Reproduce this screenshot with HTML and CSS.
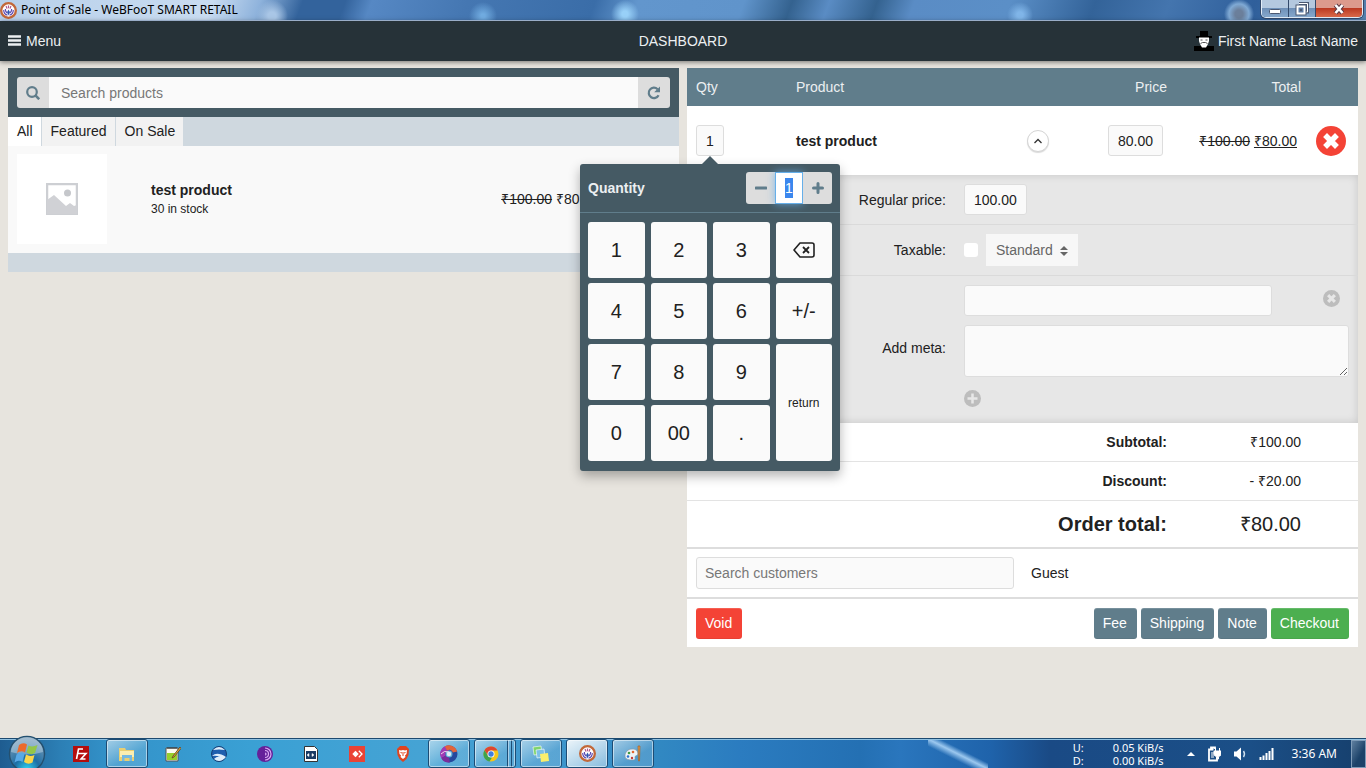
FILE: index.html
```html
<!DOCTYPE html>
<html lang="en">
<head>
    <meta charset="UTF-8">
    <meta name="viewport" content="width=device-width, initial-scale=1.0">
    <title>Point of Sale - WeBFooT SMART RETAIL</title>
    <link rel="stylesheet" href="styles.css">
</head>
<body>
<svg class="sprite" aria-hidden="true">
    <symbol id="logo" viewBox="0 0 16 16">
        <circle cx="8" cy="8" r="6.9" fill="#fff" stroke="#c2683a" stroke-width="2.2"/>
        <path d="M8 3.2v2.6M5.7 3.8l.9 2.4M10.300 3.800l-.9 2.400" stroke="#b0568a" stroke-width="1.100" fill="none"/>
        <path d="M3.500 7.500q0 4 3.500 4.800M12.500 7.500q0 4-3.500 4.800M5 6.500q0 3 2 4.200M11 6.500q0 3-2 4.200" stroke="#5a46b0" stroke-width="1.100" fill="none"/>
        <path d="M8 7l1.300 2.500L8 12.800 6.700 9.500z" fill="#2f58b0"/>
    </symbol>
    <symbol id="x-circle" viewBox="0 0 30 30">
        <circle cx="15" cy="15" r="15" fill="currentColor"/>
        <path d="M11 11l8 8M19 11l-8 8" class="cross" stroke-width="5.500" stroke-linecap="square"/>
    </symbol>
</svg>
<div class="titlebar">
    <svg class="titlebar-logo"><use href="#logo"/></svg>
    <span class="titlebar-text">Point of Sale - WeBFooT SMART RETAIL</span>
    <div class="window-buttons">
        <button class="win-btn" aria-label="Minimize">
            <svg width="14" height="12" viewBox="0 0 14 12"><rect x="1.500" y="6.500" width="11" height="4" rx="1" fill="#fff" stroke="#4b5872"/></svg>
        </button>
        <button class="win-btn" aria-label="Restore">
            <svg width="14" height="14" viewBox="0 0 14 14"><path d="M4 1.500h8.500v8.500h-2" fill="none" stroke="#4b5872" stroke-width="3"/><path d="M4 1.500h8.500v8.500h-2" fill="none" stroke="#fff"/><rect x="2.500" y="4.500" width="7" height="7" fill="#4b5872" stroke="#4b5872" stroke-width="4"/><rect x="2.500" y="4.500" width="7" height="7" fill="#5f7da5" stroke="#fff" stroke-width="2"/><rect x="5" y="7" width="2" height="2" fill="#4b5872"/></svg>
        </button>
        <button class="win-btn win-close" aria-label="Close">
            <svg width="14" height="12" viewBox="0 0 14 12"><path d="M3.500 2l7 8M10.500 2l-7 8" stroke="#5b3a45" stroke-width="4.500"/><path d="M3.500 2l7 8M10.500 2l-7 8" stroke="#fff" stroke-width="2.600"/></svg>
        </button>
    </div>
</div>

<header class="header">
    <a href="#" class="menu-link">
        <svg width="14" height="14" viewBox="0 0 14 14"><path d="M0 2.500h13M0 6.500h13M0 10.500h13" stroke="#eceff1" stroke-width="2.400"/></svg>
        Menu
    </a>
    <h1>DASHBOARD</h1>
    <a href="#" class="user-link">
        <svg width="20" height="20" viewBox="0 0 20 20">
            <path d="M6 0h8v5h4v2H2V5h4zM0 15h20v5H0z" fill="#000"/>
            <path d="M5 6.500h10v3.500l-1 3-2 3.500H8L6 13l-1-3z" fill="#fff"/>
            <path d="M6.500 9h2M11.500 9h2M6.500 12.500l2-1h3l2 1" stroke="#555" fill="none"/>
        </svg>
        First Name Last Name
    </a>
</header>

<main class="columns">
    <section class="products">
        <form class="search-bar">
            <div class="input-group">
                <button type="button" aria-label="Search">
                    <svg width="14" height="14" viewBox="0 0 14 14"><circle cx="6" cy="6" r="4.800" fill="none" stroke="currentColor" stroke-width="2.200"/><path d="M9.200 9.200l4 4" stroke="currentColor" stroke-width="2.600"/></svg>
                </button>
                <input type="text" placeholder="Search products" aria-label="Search products">
                <button type="button" aria-label="Refresh">
                    <svg width="14" height="14" viewBox="0 0 14 14"><path d="M11.600 9.200A5.200 5.200 0 1 1 10.600 3.200" fill="none" stroke="currentColor" stroke-width="2.200"/><path d="M13 .5v5.800H7.200z" fill="currentColor"/></svg>
                </button>
            </div>
        </form>
        <nav class="tabs">
            <a href="#" class="active">All</a>
            <a href="#">Featured</a>
            <a href="#">On Sale</a>
        </nav>
        <article class="product">
            <div class="product-image">
                <svg width="32" height="32" viewBox="0 0 32 32">
                    <rect x="1" y="1" width="30" height="30" fill="#fff" stroke="#cdcfd3" stroke-width="2.500"/>
                    <circle cx="21.500" cy="10" r="3.500" fill="#c5c7cb"/>
                    <path d="M1 17l7-5 12 11 4-3 4 3 3-1v9H1z" fill="#d0d1d5"/>
                </svg>
            </div>
            <div class="product-info">
                <strong>test product</strong>
                <small>30 in stock</small>
            </div>
            <div class="product-price"><del>₹100.00</del> ₹80.00</div>
        </article>
        <div class="products-footer"></div>
    </section>

    <section class="cart">
        <table class="cart-table">
            <thead>
            <tr>
                <th class="col-qty">Qty</th>
                <th>Product</th>
                <th class="col-price">Price</th>
                <th class="col-total">Total</th>
                <th class="col-remove" aria-label="Remove"></th>
            </tr>
            </thead>
            <tbody>
            <tr class="cart-item">
                <td>
                    <div class="qty">
                        <button class="field-btn">1</button>
                        <div class="popover">
                            <div class="popover-header">
                                <label for="quantity">Quantity</label>
                                <div class="input-group stepper">
                                    <button aria-label="Decrease"><svg width="12" height="12" viewBox="0 0 12 12"><path d="M1 6h10" stroke="currentColor" stroke-width="3" stroke-linecap="round"/></svg></button>
                                    <input type="text" id="quantity" value="1">
                                    <button aria-label="Increase"><svg width="12" height="12" viewBox="0 0 12 12"><path d="M1.500 6h9M6 1.500v9" stroke="currentColor" stroke-width="3" stroke-linecap="round"/></svg></button>
                                </div>
                            </div>
                            <div class="keypad">
                                <button>1</button>
                                <button>2</button>
                                <button>3</button>
                                <button aria-label="Delete">
                                    <svg width="22" height="16" viewBox="0 0 22 16"><path d="M7 1h12q2 0 2 2v10q0 2-2 2H7L1 8z" fill="none" stroke="currentColor" stroke-width="1.600" stroke-linejoin="round"/><path d="M10 5l6 6M16 5l-6 6" stroke="currentColor" stroke-width="1.800"/></svg>
                                </button>
                                <button>4</button>
                                <button>5</button>
                                <button>6</button>
                                <button>+/-</button>
                                <button>7</button>
                                <button>8</button>
                                <button>9</button>
                                <button class="key-return">return</button>
                                <button>0</button>
                                <button>00</button>
                                <button>.</button>
                            </div>
                        </div>
                    </div>
                </td>
                <td>
                    <div class="cart-name">
                        <strong>test product</strong>
                        <button class="toggle" aria-label="Hide details">
                            <svg width="10" height="6" viewBox="0 0 10 6"><path d="M1.500 5L5 1.500 8.500 5" fill="none" stroke="#333" stroke-width="1.300"/></svg>
                        </button>
                    </div>
                </td>
                <td class="num"><button class="field-btn">80.00</button></td>
                <td class="num"><del>₹100.00</del> <ins>₹80.00</ins></td>
                <td class="remove-cell">
                    <button class="icon-btn remove" aria-label="Remove item"><svg width="30" height="30"><use href="#x-circle"/></svg></button>
                </td>
            </tr>
            <tr>
                <td colspan="5" class="details">
                    <div class="detail-row">
                        <label for="regular-price">Regular price:</label>
                        <div><button class="field-btn" id="regular-price">100.00</button></div>
                    </div>
                    <div class="detail-row">
                        <label for="taxable">Taxable:</label>
                        <div class="tax">
                            <input type="checkbox" id="taxable">
                            <div class="select-wrap">
                                <select aria-label="Tax class">
                                    <option>Standard</option>
                                </select>
                                <svg width="8" height="10" viewBox="0 0 8 10"><path d="M4 0l4 4H0zM4 10L0 6h8z" fill="#666"/></svg>
                            </div>
                        </div>
                    </div>
                    <div class="detail-row">
                        <label for="meta-value">Add meta:</label>
                        <div class="meta">
                            <div class="meta-key">
                                <input type="text" aria-label="Meta key">
                                <button class="icon-btn" aria-label="Remove meta"><svg width="17" height="17"><use href="#x-circle"/></svg></button>
                            </div>
                            <textarea id="meta-value"></textarea>
                            <button class="icon-btn add-meta" aria-label="Add meta">
                                <svg width="17" height="17" viewBox="0 0 17 17"><circle cx="8.500" cy="8.500" r="8.500" fill="currentColor"/><path d="M3.500 8.500h10M8.500 3.500v10" stroke="#e7e7e7" stroke-width="2.500"/></svg>
                            </button>
                        </div>
                    </div>
                </td>
            </tr>
            </tbody>
        </table>

        <dl class="totals">
            <div><dt>Subtotal:</dt><dd>₹100.00</dd></div>
            <div><dt>Discount:</dt><dd>- ₹20.00</dd></div>
            <div class="order-total"><dt>Order total:</dt><dd>₹80.00</dd></div>
        </dl>
        <div class="customer">
            <input type="text" placeholder="Search customers" aria-label="Search customers">
            <span>Guest</span>
        </div>
        <div class="actions">
            <button class="btn btn-void">Void</button>
            <button class="btn">Fee</button>
            <button class="btn">Shipping</button>
            <button class="btn">Note</button>
            <button class="btn btn-checkout">Checkout</button>
        </div>
    </section>
</main>

<footer class="taskbar">
    <button class="start" aria-label="Start">
        <svg width="38" height="38" viewBox="0 0 38 38">
            <defs>
                <radialGradient id="orb" cx=".5" cy=".95" r=".9">
                    <stop offset="0" stop-color="#2fd8f5"/>
                    <stop offset=".4" stop-color="#1d6ea5"/>
                    <stop offset="1" stop-color="#7d9db8"/>
                </radialGradient>
            </defs>
            <circle cx="19" cy="19" r="17.500" fill="url(#orb)" stroke="#24506f" stroke-width="1.500"/>
            <path d="M3 17a16 15 0 0 1 32 0q-16 5-32 0z" fill="#dceaf3" opacity=".4"/>
            <path d="M11 10q4-3 8-.5l-2 8q-4-2.500-8 .5z" fill="#ec6a2b"/>
            <path d="M20.500 10.500q4 2 9-.5l-2.500 8q-4 2.500-8.500-.5z" fill="#94c748"/>
            <path d="M8.500 19.500q4-3 8-.5l-2 8q-4-2.500-8 .5z" fill="#58a9e6"/>
            <path d="M18 19.500q4 2.500 8.500.5l-2 7.500q-4 2.500-8.500-.5z" fill="#fbd64b"/>
        </svg>
    </button>
    <div class="tasks">
        <button aria-label="FileZilla">
            <svg width="16" height="16" viewBox="0 0 16 16"><rect width="16" height="16" fill="#b50d0d"/><path d="M10 3H5.500L3.500 13M4.500 7.500h4M8 7.500h5L8 13h4.500" fill="none" stroke="#fff" stroke-width="1.600"/></svg>
        </button>
        <button class="open" aria-label="Explorer">
            <svg width="18" height="16" viewBox="0 0 18 16"><path d="M1 2h6l1 2h8v11H1z" fill="#e9cf72"/><path d="M2 5h14v6H2z" fill="#fbeeb0"/><path d="M4 15V9h10v6h-2.500v-3h-5v3z" fill="#74b9e2"/></svg>
        </button>
        <button aria-label="Notepad++">
            <svg width="16" height="16" viewBox="0 0 16 16"><path d="M1 2h12v13H1z" fill="#fafaf0" stroke="#555"/><path d="M2 7h10v7H2z" fill="#98cf2c"/><path d="M3 1v2M5 1v2M7 1v2M9 1v2M11 1v2" stroke="#333"/><path d="M15 1L8 10l-1 2 2-1 7-8.500z" fill="#e8a33b" stroke="#5b4322" stroke-width=".8"/></svg>
        </button>
        <button aria-label="Browser">
            <svg width="16" height="16" viewBox="0 0 16 16"><circle cx="8" cy="8" r="7.500" fill="#1e5fae" stroke="#153e74"/><path d="M2 4q6-6 12 0-6-1-12 0zM1 10q5-5 14 1-6 7-12 2 3-3 6-2-4-2-8-1z" fill="#dfeefa"/></svg>
        </button>
        <button aria-label="Tor Browser">
            <svg width="16" height="16" viewBox="0 0 16 16"><circle cx="8" cy="8" r="8" fill="#65209a"/><path d="M8 2a6 6 0 0 1 0 12M8 4.500a3.500 3.500 0 0 1 0 7M8 7a1 1 0 0 1 0 2" fill="none" stroke="#d9a8f2" stroke-width="1.200"/></svg>
        </button>
        <button aria-label="Console">
            <svg width="14" height="16" viewBox="0 0 14 16"><path d="M.5.5h10l3 3v12H.5z" fill="#fff" stroke="#333"/><rect x="2" y="5" width="10" height="8" fill="#183a63"/><path d="M3 9l2-1.500v3zM8 7.500v3L10 9z" fill="#fff" stroke="#fff" stroke-width=".5"/></svg>
        </button>
        <button aria-label="AnyDesk">
            <svg width="16" height="16" viewBox="0 0 16 16"><rect width="16" height="16" fill="#ea4335"/><path d="M6.500 4.800L9.700 8l-3.200 3.200L3.300 8z" fill="#fff"/><path d="M9.800 4.800L13 8l-3.200 3.200" fill="none" stroke="#fff" stroke-width="1.300"/></svg>
        </button>
        <button aria-label="Brave">
            <svg width="14" height="16" viewBox="0 0 14 16"><path d="M4 0h6l1.500 1.500L13 3l-.5 6-2 4L7 16l-3.500-3-2-4L1 3z" fill="#e0441f"/><path d="M3 4l2 .5L7 4l2 .5 2-.5-.5 4L9 9.500l.5 1.500L7 13l-2.500-2 .5-1.500L3.500 8z" fill="#fff"/><path d="M7 6v4M4.500 6.500L6 7M9.500 6.500L8 7" stroke="#e0441f" fill="none"/></svg>
        </button>
        <button class="open" aria-label="Media">
            <svg width="18" height="18" viewBox="0 0 18 18"><circle cx="9" cy="9" r="6" fill="none" stroke="#25489d" stroke-width="5"/><path d="M3.500 12A6 6 0 0 1 9 3" fill="none" stroke="#a13bb5" stroke-width="5"/><path d="M6 3.500A6 6 0 0 1 15 7" fill="none" stroke="#e2653b" stroke-width="4.500"/><path d="M3.500 12a6 6 0 0 0 6 3" fill="none" stroke="#7a2d9c" stroke-width="5"/><path d="M1 9q3-4 8-2" stroke="#efd9ee" fill="none"/><circle cx="9" cy="9" r="2.200" fill="#e4ecf5"/></svg>
        </button>
        <button class="open stacked" aria-label="Chrome">
            <svg width="16" height="16" viewBox="0 0 16 16"><circle cx="8" cy="8" r="7.500" fill="#f5c61b"/><path d="M1.500 4.200A7.500 7.500 0 0 1 14.500 4.500H8L5 9.500z" fill="#dd4632"/><path d="M1.500 4.200L5 9.800l4 1.700-2.500 4A7.500 7.500 0 0 1 1.500 4.200z" fill="#3fa34e"/><circle cx="8" cy="8" r="3.500" fill="#fff"/><circle cx="8" cy="8" r="2.700" fill="#3f7ee0"/></svg>
        </button>
        <button class="open" aria-label="Sticky Notes">
            <svg width="18" height="18" viewBox="0 0 18 18"><path d="M1 2l8-1 1 8-8 1z" fill="#7fd46c" stroke="#fff" stroke-width=".6"/><path d="M4 5l8-1 1 8-8 1z" fill="#7cc0e8" stroke="#fff" stroke-width=".6"/><path d="M8 9l8-1 1 8-8 1z" fill="#fbee6c"/></svg>
        </button>
        <button class="open current" aria-label="Point of Sale"><svg width="17" height="17"><use href="#logo"/></svg></button>
        <button class="open" aria-label="Paint">
            <svg width="18" height="18" viewBox="0 0 18 18"><path d="M1 11c0-4 3-7 7-7s6 2 6 5c0 2-3 1-3 3s1 3-3 3-7-1-7-4z" fill="#eef3f7" stroke="#8396a8" stroke-width=".7"/><circle cx="5" cy="8" r="1.300" fill="#3f9b42"/><circle cx="9" cy="7" r="1.300" fill="#e2662c"/><circle cx="4" cy="11.500" r="1.300" fill="#2c73cf"/><circle cx="8" cy="13" r="1.200" fill="#c53b35"/><path d="M14 1h2l-.5 15h-1z" fill="#e99b45" stroke="#a2622a" stroke-width=".7"/></svg>
        </button>
    </div>
    <dl class="net-speed">
        <dt>U:</dt><dd>0.05 KiB/s</dd>
        <dt>D:</dt><dd>0.00 KiB/s</dd>
    </dl>
    <div class="tray">
        <svg width="8" height="4" viewBox="0 0 8 4"><path d="M0 4l4-4 4 4z" fill="#fff"/></svg>
        <svg width="14" height="16" viewBox="0 0 14 16"><path d="M6.500 3.500H2v11h8V11M4 3V1.500h4V3" fill="none" stroke="#fff" stroke-width="1.800"/><path d="M4 6h3v6H4z" fill="#fff" opacity=".5"/><path d="M7 5h7v3q0 2-2.500 2.500V13h-2v-2.500Q7 10 7 8zM8.500 2v3M12.500 2v3" fill="#fff" stroke="#fff"/></svg>
        <svg width="14" height="14" viewBox="0 0 14 14"><path d="M1 4.500h2.500L8 .5v13L3.500 9.500H1z" fill="#fff"/><path d="M10.500 4q2 3 0 6" fill="none" stroke="#cfe0ef" stroke-width="1.400"/></svg>
        <svg width="15" height="12" viewBox="0 0 15 12"><path d="M1.500 9v3M4.500 7.500v4.500M7.500 5v7M10.500 3v9M13.500 0v12" stroke="#fff" stroke-width="2"/></svg>
    </div>
    <time class="clock">3:36 AM</time>
    <button class="show-desktop" aria-label="Show desktop"></button>
</footer>

<script>
    // Open the numpad with its value ready to be overwritten
    const quantity = document.getElementById('quantity');
    quantity.focus();
    quantity.select();
</script>
</body>
</html>
```

FILE: styles.css
```css
:root {
    --header: #263238;
    --dark: #455a64;
    --slate: #607d8b;
    --page: #e7e4de;
    --field: #fafafa;
    --border: #dddddd;
    --red: #f44336;
    --green: #4caf50;
}
* {
    box-sizing: border-box;
}
body {
    display: flex;
    flex-direction: column;
    min-height: 100vh;
    margin: 0;
    background: var(--page);
    color: #212121;
    font: 14px/20px "Liberation Sans", Arial, sans-serif;
}
button, input, select, textarea {
    font: inherit;
    color: inherit;
    margin: 0;
}
button {
    padding: 0;
    border: 0;
    background: none;
    cursor: pointer;
}
svg {
    display: block;
    flex: none;
}
dl, dd, h1 {
    margin: 0;
}
.sprite {
    position: absolute;
    width: 0;
    height: 0;
}

/* window title bar */
.titlebar {
    display: flex;
    align-items: center;
    height: 21px;
    border-bottom: 1px solid #b4cbea;
    background:
        radial-gradient(circle at 272px 16px, #a9c6e6 4px, transparent 16px),
        radial-gradient(circle at 483px 16px, #70abe0 2px, transparent 14px),
        radial-gradient(circle at 625px 14px, #98d0f8 3px, transparent 14px),
        radial-gradient(circle at 1020px 15px, #80b5e8 3px, transparent 13px),
        radial-gradient(circle at 1239px 14px, #6b7f9b 4px, #7fa9d4 10px, transparent 15px),
        linear-gradient(110deg, #b8d0ea 0, #c9dcf1 200px, #8fb3dc 245px, #33639c 285px, #33639c 325px, #5688c4 350px, #4577b2 440px, #3a6da8 560px, #6296cd 600px, #6094cb 700px, #34628f 745px, #5a8cc4 780px, #34628f 825px, #5a8cc5 860px, #5b8fc7 950px, #336399 1030px, #4475ae 1100px, #2f5f9b 1180px, #5580ad 100%);
    color: #000;
    font: 12px/20px "Noto Sans", "Segoe UI", sans-serif;
}
.titlebar-logo {
    width: 17px;
    height: 17px;
}
.titlebar-text {
    margin-left: 4px;
}
.window-buttons {
    display: flex;
    align-self: flex-start;
    height: 18px;
    margin: 0 3px 0 auto;
    border: 1px solid #e3edf8;
    border-top: 0;
    border-radius: 0 0 5px 5px;
    box-shadow: 0 0 0 1px #33496b;
    overflow: hidden;
}
.win-btn {
    display: grid;
    place-items: center;
    width: 27px;
    border-right: 1px solid #33496b;
    background: linear-gradient(#b4c8df 45%, #6f90b8 50%, #86a8cd);
}
.win-close {
    width: 46px;
    border-right: 0;
    background: linear-gradient(#dc9a8c 45%, #bb3a22 50%, #d9694a);
}

/* application header */
.header {
    display: grid;
    grid-template-columns: 1fr auto 1fr;
    align-items: center;
    height: 40px;
    padding: 0 8px;
    background: var(--header);
    color: #eceff1;
    box-shadow: 0 1px 5px rgba(0, 0, 0, 0.5);
}
.header h1 {
    font-size: 14px;
    font-weight: normal;
}
.header a {
    display: flex;
    align-items: center;
    gap: 4px;
    color: inherit;
    text-decoration: none;
}
.user-link {
    justify-self: end;
}
.columns {
    flex: 1;
    display: grid;
    grid-template-columns: minmax(0, 1fr) minmax(0, 1fr);
    gap: 8px;
    align-items: start;
    padding: 7px 8px;
}

/* product list */
.search-bar {
    padding: 9px;
    background: var(--dark);
}
.input-group {
    display: flex;
    height: 31px;
    border-radius: 3px;
}
.input-group button {
    display: grid;
    place-items: center;
    width: 32px;
    background: #dddddd;
    color: var(--slate);
}
.input-group button:first-child {
    border-radius: 3px 0 0 3px;
}
.input-group button:last-child {
    border-radius: 0 3px 3px 0;
}
.input-group input {
    flex: 1;
    min-width: 0;
    padding: 0 12px;
    border: 0;
    background: var(--field);
}
input::placeholder {
    color: #777777;
}
.tabs {
    display: flex;
    gap: 1px;
    background: #cfd8df;
}
.tabs a {
    padding: 4px 8px 5px 9px;
    background: #f2f2f2;
    color: inherit;
    text-decoration: none;
}
.tabs .active {
    background: #fff;
}
.product {
    display: flex;
    align-items: center;
    padding: 8px 9px 9px;
    background: #f9f9f9;
}
.product-image {
    display: grid;
    place-items: center;
    width: 90px;
    height: 90px;
    background: #fff;
}
.product-info {
    display: flex;
    flex-direction: column;
    flex: 1;
    margin-left: 44px;
}
.product-info small {
    font-size: 12px;
    line-height: 18px;
}
.product-price {
    margin-right: 71px;
}
.products-footer {
    height: 19px;
    background: #cfd8df;
}

/* cart */
.cart {
    background: #fff;
}
.cart-table {
    width: 100%;
    table-layout: fixed;
    border-collapse: collapse;
}
.cart-table th {
    padding: 9px;
    background: var(--slate);
    color: #eceff1;
    font-weight: normal;
    text-align: left;
}
.col-qty {
    width: 100px;
}
.cart-table .col-price {
    width: 118px;
    text-align: right;
}
.cart-table .col-total {
    width: 134px;
    text-align: right;
}
.col-remove {
    width: 48px;
}
.cart-item td {
    height: 69px;
    padding: 0 9px;
}
.cart-table .num {
    padding: 0 13px 0 0;
    text-align: right;
    white-space: nowrap;
}
.field-btn {
    height: 31px;
    padding: 0 9px;
    border: 1px solid var(--border);
    border-radius: 3px;
    background: var(--field);
}
.cart-name {
    display: flex;
    justify-content: space-between;
    align-items: center;
}
.toggle {
    display: grid;
    place-items: center;
    width: 22px;
    height: 22px;
    border: 1px solid #d5d5d5;
    border-radius: 50%;
    background: #fff;
    box-shadow: 0 1px 1px rgba(0, 0, 0, 0.15);
}
.icon-btn {
    --cross: #e7e7e7;
    display: grid;
    place-items: center;
    color: #bdbdbd;
}
.cross {
    stroke: var(--cross);
}
.cart-item .remove-cell {
    padding: 0 12px 0 6px;
}
.remove {
    --cross: #fff;
    color: var(--red);
}
.details {
    padding: 0;
    background: #e7e7e7;
    box-shadow: inset 0 0 8px rgba(0, 0, 0, 0.15);
}
.detail-row {
    display: grid;
    grid-template-columns: 250px 1fr;
    gap: 18px;
    align-items: center;
    padding: 9px;
}
.detail-row + .detail-row {
    border-top: 1px solid #dadada;
}
.detail-row:last-child {
    padding-bottom: 13px;
}
.detail-row > label {
    text-align: right;
}
.tax {
    display: flex;
    align-items: center;
    gap: 8px;
}
.tax input {
    appearance: none;
    width: 14px;
    height: 14px;
    border-radius: 3px;
    background: #fff;
}
.select-wrap {
    position: relative;
}
.select-wrap select {
    appearance: none;
    display: block;
    width: 92px;
    height: 32px;
    padding: 0 10px;
    border: 0;
    background: #f7f7f7;
    color: #666666;
}
.select-wrap svg {
    position: absolute;
    top: 12px;
    right: 10px;
    pointer-events: none;
}
.meta {
    display: flex;
    flex-direction: column;
    gap: 9px;
}
.meta-key {
    display: flex;
    justify-content: space-between;
}
.meta-key input {
    width: 80%;
    height: 31px;
}
.meta-key .icon-btn {
    width: 36px;
    height: 27px;
}
.meta input, .meta textarea, .customer input {
    padding: 0 8px;
    border: 1px solid var(--border);
    border-radius: 3px;
    background: var(--field);
}
.meta textarea {
    display: block;
    width: 100%;
    height: 52px;
}
.add-meta {
    align-self: flex-start;
    height: 24px;
}
.totals > div {
    display: flex;
    justify-content: flex-end;
    padding: 9px 57px 9px 9px;
    border-bottom: 1px solid #e3e3e3;
}
.totals dt {
    font-weight: bold;
}
.totals dd {
    width: 134px;
    text-align: right;
}
.totals .order-total {
    padding-top: 11px;
    padding-bottom: 11px;
    border-bottom: 2px solid var(--border);
    font-size: 20px;
    line-height: 24px;
}
.customer {
    display: flex;
    align-items: center;
    gap: 17px;
    padding: 8px 9px;
    border-bottom: 2px solid var(--border);
}
.customer input {
    width: 318px;
    height: 32px;
}
.actions {
    display: flex;
    gap: 4px;
    padding: 9px 9px 8px;
}
.btn {
    height: 31px;
    padding: 0 10px 1px 9px;
    border-radius: 3px;
    background: var(--slate);
    color: #fff;
    box-shadow: inset 0 1px rgba(255, 255, 255, 0.15), inset 0 -1px rgba(0, 0, 0, 0.05);
}
.btn-void {
    margin-right: auto;
    background: var(--red);
}
.btn-checkout {
    background: var(--green);
}

/* quantity popover */
.qty {
    position: relative;
    width: 28px;
}
.qty .field-btn {
    width: 28px;
    padding: 0;
}
.popover {
    position: absolute;
    top: 39px;
    left: 50%;
    z-index: 1;
    width: 260px;
    margin-left: -130px;
    border-radius: 3px;
    background: var(--dark);
    box-shadow: 0 5px 12px rgba(0, 0, 0, 0.3);
}
.popover::before {
    content: "";
    position: absolute;
    top: -8px;
    left: 50%;
    margin-left: -8px;
    border: 8px solid transparent;
    border-top: 0;
    border-bottom-color: var(--dark);
}
.popover-header {
    display: flex;
    align-items: center;
    justify-content: space-between;
    padding: 8px;
    border-bottom: 1px solid var(--slate);
    color: #eceff1;
    font-weight: bold;
}
.stepper {
    width: 86px;
    height: 32px;
}
.stepper button {
    width: 29px;
}
.stepper input {
    padding: 0;
    background: #fff;
    color: #212121;
    font-weight: normal;
    text-align: center;
}
.stepper input:focus {
    outline: 1px solid #66afe9;
    outline-offset: -1px;
    box-shadow: 0 0 8px rgba(102, 175, 233, 0.8);
}
.stepper input::selection {
    background: #3b87ee;
    color: #fff;
}
.keypad {
    display: grid;
    grid-template-columns: repeat(4, 1fr);
    grid-auto-rows: 56px;
    gap: 5px 6px;
    padding: 9px 8px 10px;
}
.keypad button {
    display: grid;
    place-items: center;
    border-radius: 3px;
    background: var(--field);
    font-size: 20px;
}
.keypad .key-return {
    grid-row: span 2;
    font-size: 12px;
}

/* taskbar */
.taskbar {
    display: flex;
    align-items: center;
    height: 30px;
    border-top: 1px solid #1d4a70;
    background:
        linear-gradient(#8fc1e2 1px, transparent 1px),
        linear-gradient(to top right, transparent 38%, #9cc8ef 50%, transparent 60%) 928px 0 / 60px 30px no-repeat,
        linear-gradient(90deg, #1e5c90 0, #2c7fb5 60px, #3392c9 110px, #3aa0d4 250px, #45a3d4 420px, #3d95cc 560px, #3188c2 660px, #2b7cc0 740px, #2470b3 860px, #2a76bd 900px, #1f63ab 990px, #1a4a85 1050px, #1b4f87 1250px, #163f6c 100%);
    color: #fff;
    font: 12px/14px "Noto Sans", "Segoe UI", sans-serif;
}
.start {
    width: 60px;
    height: 38px;
    padding-left: 8px;
}
.tasks {
    display: flex;
    gap: 4px;
    margin-right: auto;
}
.tasks button {
    display: grid;
    place-items: center;
    width: 42px;
    height: 29px;
    border-radius: 3px;
}
.tasks .open {
    border: 1px solid #1d4c74;
    background: linear-gradient(150deg, rgba(255, 255, 255, 0.55), rgba(255, 255, 255, 0.15) 60%);
    box-shadow: inset 0 0 0 1px rgba(255, 255, 255, 0.5);
}
.tasks .current {
    background: linear-gradient(150deg, rgba(255, 255, 255, 0.9), rgba(255, 255, 255, 0.4));
}
.tasks .stacked {
    padding-right: 8px;
    background:
        linear-gradient(90deg, transparent 32px, #1d4c74 32px, #1d4c74 33px, #a9d0ea 33px, #a9d0ea 34px, transparent 34px, transparent 36px, #1d4c74 36px, #1d4c74 37px, transparent 37px),
        linear-gradient(150deg, rgba(255, 255, 255, 0.55), rgba(255, 255, 255, 0.15) 60%);
}
.net-speed {
    display: grid;
    grid-template-columns: 40px auto;
    margin-right: 23px;
    font-size: 11px;
    line-height: 13px;
}
.tray {
    display: flex;
    align-items: center;
    gap: 12px;
    margin-right: 18px;
}
.clock {
    margin-right: 14px;
}
.show-desktop {
    width: 15px;
    height: 28px;
    border: 1px solid #7e9bb8;
    background: linear-gradient(120deg, #5f7f9f, #1c4269 60%);
}
```
